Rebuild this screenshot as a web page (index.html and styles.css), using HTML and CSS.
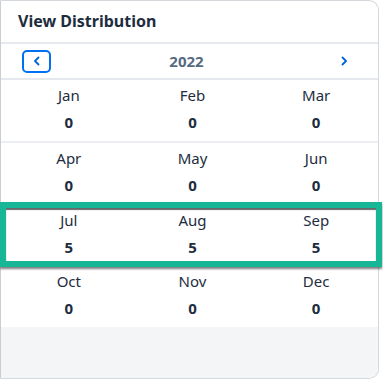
FILE: index.html
```html
<!DOCTYPE html>
<html lang="en">
<head>
    <meta charset="UTF-8">
    <meta name="viewport" content="width=device-width, initial-scale=1.0">
    <title>View Distribution</title>
    <link rel="stylesheet" href="styles.css">
</head>
<body>
    <div class="card">
        <div class="card-header">View Distribution</div>
        <div class="year-nav">
            <button class="nav-btn nav-prev" aria-label="Previous year">
                <svg width="10" height="10" viewBox="0 0 10 10"><path d="M6.5 1.5 L3 5 L6.5 8.5" fill="none" stroke="#0064d9" stroke-width="1.8" stroke-linecap="round" stroke-linejoin="round"/></svg>
            </button>
            <span class="year">2022</span>
            <button class="nav-btn nav-next" aria-label="Next year">
                <svg width="10" height="10" viewBox="0 0 10 10"><path d="M3.5 1.5 L7 5 L3.5 8.5" fill="none" stroke="#0064d9" stroke-width="1.8" stroke-linecap="round" stroke-linejoin="round"/></svg>
            </button>
        </div>
        <div class="months">
            <div class="month-row">
                <div class="month"><span class="label">Jan</span><span class="value">0</span></div>
                <div class="month"><span class="label">Feb</span><span class="value">0</span></div>
                <div class="month"><span class="label">Mar</span><span class="value">0</span></div>
            </div>
            <div class="month-row">
                <div class="month"><span class="label">Apr</span><span class="value">0</span></div>
                <div class="month"><span class="label">May</span><span class="value">0</span></div>
                <div class="month"><span class="label">Jun</span><span class="value">0</span></div>
            </div>
            <div class="month-row highlight">
                <div class="month"><span class="label">Jul</span><span class="value">5</span></div>
                <div class="month"><span class="label">Aug</span><span class="value">5</span></div>
                <div class="month"><span class="label">Sep</span><span class="value">5</span></div>
            </div>
            <div class="month-row">
                <div class="month"><span class="label">Oct</span><span class="value">0</span></div>
                <div class="month"><span class="label">Nov</span><span class="value">0</span></div>
                <div class="month"><span class="label">Dec</span><span class="value">0</span></div>
            </div>
        </div>
        <div class="card-footer"></div>
    </div>
</body>
</html>
```

FILE: styles.css
```css
body {
    margin: 0;
    padding: 0;
    background-color: #ffffff;
    font-family: "Noto Sans", Arial, sans-serif;
    color: #1d2d3e;
}
.card {
    width: 377px;
    height: 377px;
    border: 1px solid #d5d9de;
    border-left-color: #c9ced5;
    border-radius: 0 10px 10px 0;
    background-color: #ffffff;
    display: flex;
    flex-direction: column;
}
.card-header {
    height: 41px;
    padding-left: 17px;
    font-size: 16px;
    font-weight: bold;
    line-height: 41px;
    border-bottom: 2px solid #e5e8ec;
}
.year-nav {
    height: 34px;
    display: grid;
    grid-template-columns: 1fr auto 1fr;
    align-items: center;
    padding: 0 27px 0 21px;
    border-bottom: 2px solid #e5e8ec;
}
.nav-btn {
    display: flex;
    align-items: center;
    justify-content: center;
    background: none;
    border: none;
    padding: 0;
    cursor: pointer;
}
.nav-prev {
    justify-self: start;
    width: 29px;
    height: 23px;
    border: 2px solid #0070f2;
    border-radius: 5px;
    box-sizing: border-box;
}
.nav-next {
    justify-self: end;
    width: 14px;
    height: 23px;
}
.year {
    font-size: 15px;
    font-weight: bold;
    color: #556b82;
}
.month-row {
    display: grid;
    grid-template-columns: 1fr 1fr 1fr;
    height: 61px;
    padding: 0 0 0 6px;
}
.month-row:first-child {
    border-bottom: 2px solid #eceef1;
}
.month {
    display: flex;
    flex-direction: column;
    align-items: center;
    padding-top: 3px;
}
.label {
    font-size: 15px;
    line-height: 24px;
}
.value {
    font-size: 15px;
    font-weight: bold;
    line-height: 26px;
    margin-top: 2px;
}
.highlight {
    position: relative;
    height: 62px;
}
.highlight .month {
    padding-top: 4px;
}
.highlight::after {
    content: "";
    position: absolute;
    left: -1px;
    right: -4px;
    top: -2px;
    bottom: -1px;
    border: 6px solid #17b696;
    box-shadow: 0 2px 2px rgba(40, 40, 40, 0.6), inset 0 2px 1px rgba(40, 40, 40, 0.7);
}
.card-footer {
    flex: 1;
    background-color: #f4f5f7;
    border-radius: 0 0 10px 0;
}
```
